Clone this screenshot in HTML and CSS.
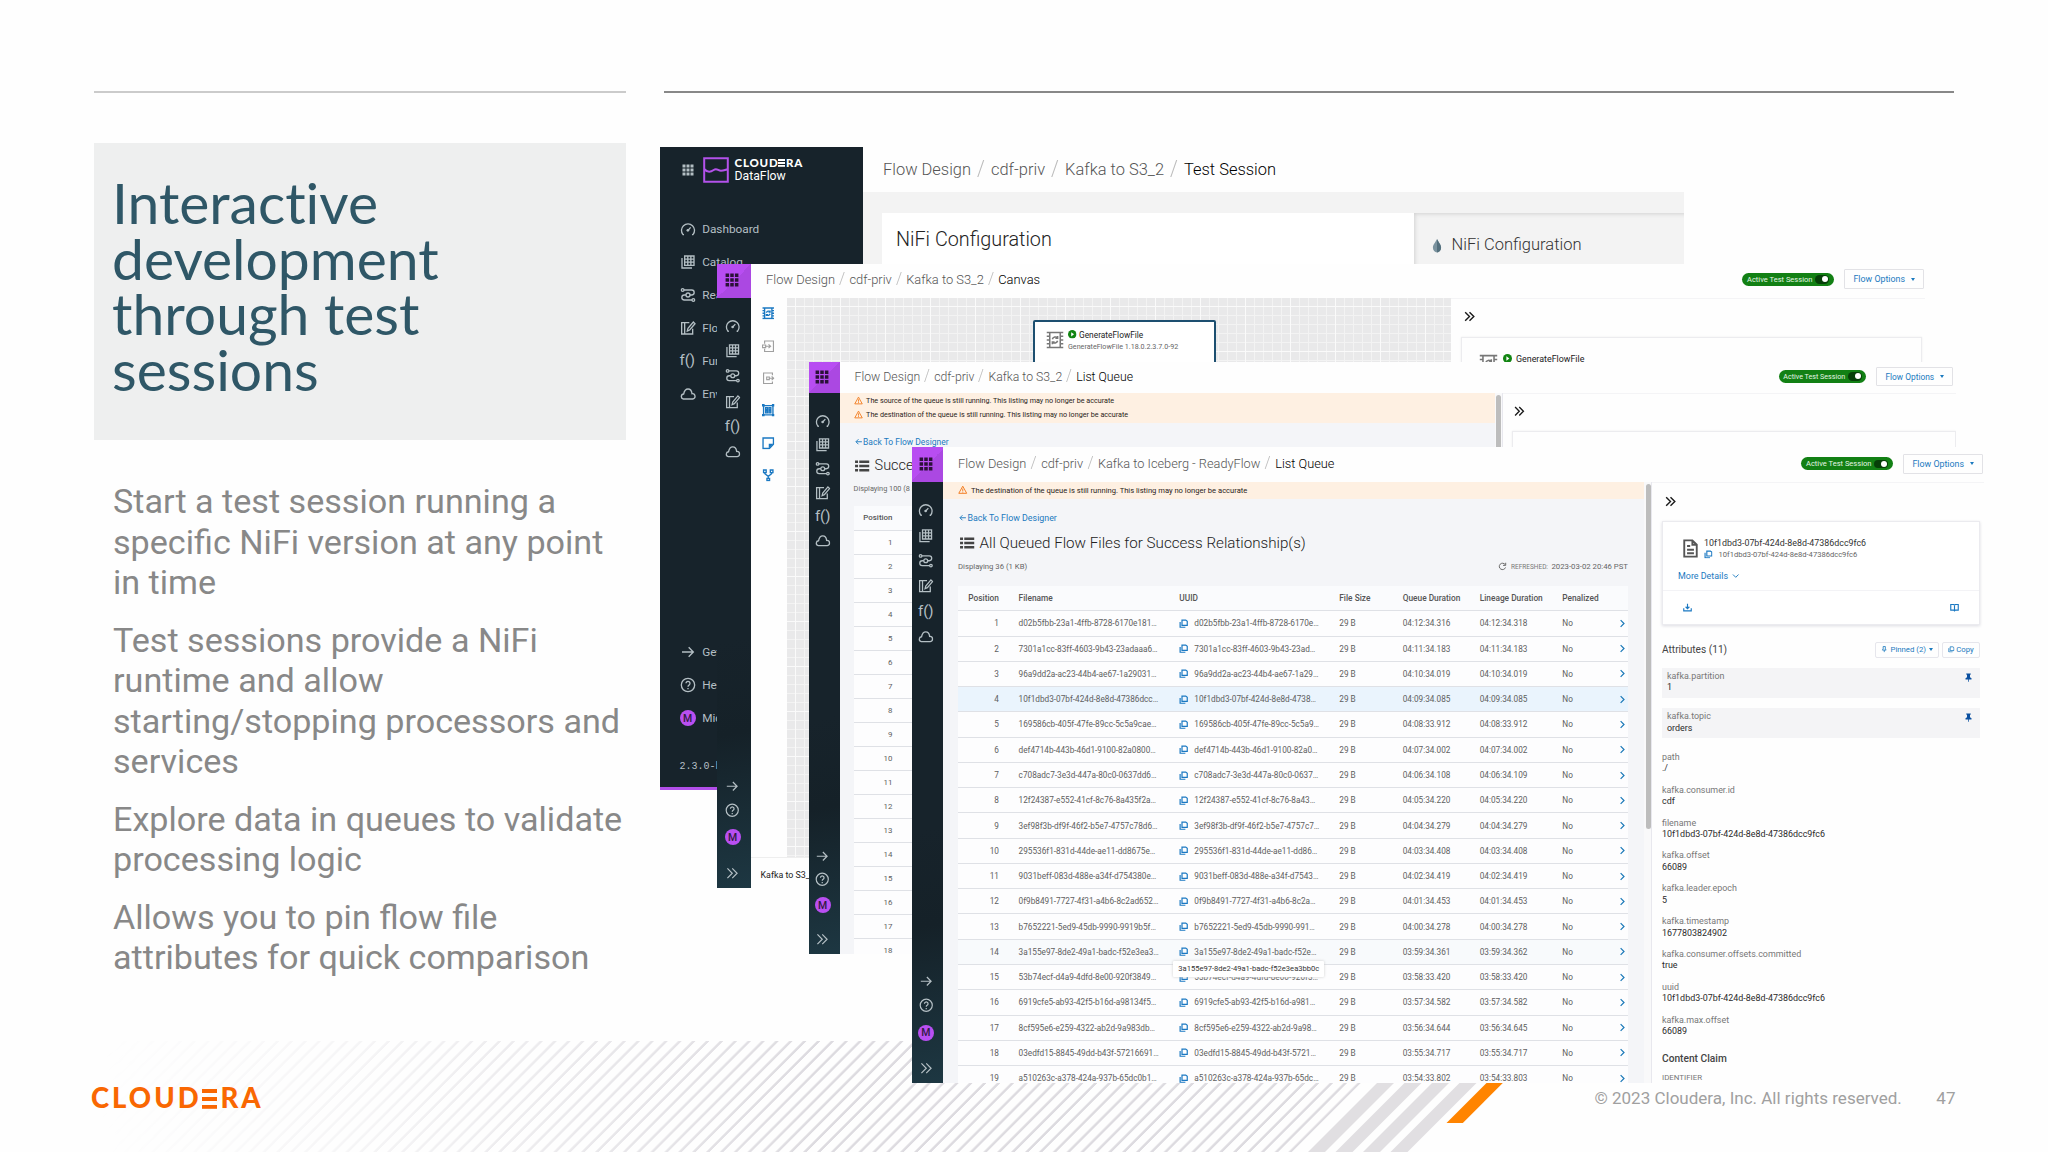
FILE: index.html
```
<!DOCTYPE html>
<html lang="en">
<head>
<meta charset="utf-8">
<title>Interactive development through test sessions</title>
<link rel="stylesheet" href="styles.css">
</head>
<body>
<svg class="defs" aria-hidden="true">
  <symbol id="dots" viewBox="0 0 24 24"><path fill="currentColor" d="M1 1h6v6H1zM9 1h6v6H9zM17 1h6v6h-6zM1 9h6v6H1zM9 9h6v6H9zM17 9h6v6h-6zM1 17h6v6H1zM9 17h6v6H9zM17 17h6v6h-6z"/></symbol>
  <symbol id="gauge" viewBox="0 0 24 24"><path class="ln" d="M6 20.5H4.6A9.8 9.8 0 1 1 19.4 20.5H18M12 14l4-4.5"/><circle cx="11.8" cy="14" r="2" fill="currentColor"/></symbol>
  <symbol id="catalog" viewBox="0 0 24 24"><path class="ln" d="M7 3h14v14H7zM11.700 3v14M16.300 3v14M7 7.700h14M7 12.300h14M3 6v15h15"/></symbol>
  <symbol id="route" viewBox="0 0 24 24"><path class="ln" d="M6 4.500h11.500a3.700 3.700 0 0 1 0 7.500H15M9 12H6.500a3.700 3.700 0 0 0 0 7.500H18"/><circle class="ln" cx="12" cy="12" r="3"/><circle class="ln" cx="4" cy="4.500" r="2"/><circle class="ln" cx="20" cy="19.500" r="2"/></symbol>
  <symbol id="edit" viewBox="0 0 24 24"><path class="ln" d="M14 4H2.500v17H19v-8M7 4v17M11 16.500l1-4L20 3l2.500 2.500-8 9.500z"/></symbol>
  <symbol id="cloud" viewBox="0 0 24 24"><path class="ln" d="M5 19.500a3.800 3.800 0 0 1 .5-7.500C6.500 7 9 4.500 12 4.500s5.500 2.500 6 7a4 4 0 0 1 1 8z"/></symbol>
  <symbol id="arrow" viewBox="0 0 24 24"><path class="ln" d="M3 12h17M13 5l7 7-7 7"/></symbol>
  <symbol id="help" viewBox="0 0 24 24"><circle class="ln" cx="12" cy="12" r="10"/><path class="ln" d="M9 9.500a3 3 0 1 1 4.500 2.600C12.300 12.800 12 13.300 12 14.500M12 16.500v2"/></symbol>
  <symbol id="dbl" viewBox="0 0 24 24"><path class="ln" d="M4 4l8 8-8 8M12 4l8 8-8 8"/></symbol>
  <symbol id="chev" viewBox="0 0 24 24"><path class="ln" d="M7 3l9 9-9 9"/></symbol>
  <symbol id="down" viewBox="0 0 24 24"><path class="ln" d="M3 8l9 9 9-9"/></symbol>
  <symbol id="back" viewBox="0 0 24 24"><path class="ln" d="M22 12H4M11 4l-8 8 8 8"/></symbol>
  <symbol id="copy" viewBox="0 0 24 24"><path class="ln" d="M8 3h10l4 3v11H8zM3 8v14h14"/></symbol>
  <symbol id="warn" viewBox="0 0 24 24"><path class="ln" d="M12 3l10 18H2zM12 9v6M12 16.500v2.500"/></symbol>
  <symbol id="list" viewBox="0 0 24 20"><path fill="currentColor" d="M0 1h5v4H0zM7 1h17v4H7zM0 8h5v4H0zM7 8h17v4H7zM0 15h5v4H0zM7 15h17v4H7z"/></symbol>
  <symbol id="refresh" viewBox="0 0 24 24"><path class="ln" d="M20 14.500a8.500 8.500 0 1 1-1-7.500M20.500 2v7h-7"/></symbol>
  <symbol id="doc" viewBox="0 0 24 30"><path class="ln" d="M2 2h13l7 7v19H2zM15 2v7h7M6.500 11h5M6.500 17h11M6.500 22.500h11"/></symbol>
  <symbol id="download" viewBox="0 0 24 24"><path class="ln" d="M12 2v13M7 10l5 5 5-5M2 14v7h20v-7"/></symbol>
  <symbol id="book" viewBox="0 0 24 24"><path class="ln" d="M2 4h8l2 2 2-2h8v15h-8l-2 2-2-2H2zM12 6v15"/></symbol>
  <symbol id="pin" viewBox="0 0 24 24"><path fill="currentColor" d="M6 1h12v2l-2 2v6l4 3v3h-7v6h-2v-6H4v-3l4-3V5L6 3z"/></symbol>
  <symbol id="pino" viewBox="0 0 24 24"><path class="ln" d="M8 2h8v9l3 4H5l3-4zM12 15v8"/></symbol>
  <symbol id="chip" viewBox="0 0 24 24"><path class="ln" d="M5 2h14v20H5zM1 2h4M1 7h4M1 12h4M1 17h4M1 22h4M19 2h4M19 7h4M19 12h4M19 17h4M19 22h4M8.500 11a4 4 0 0 1 7-1.500M15.500 13a4 4 0 0 1-7 1.500M15.500 6.500v3h-3M8.500 17.500v-3h3"/></symbol>
  <symbol id="inport" viewBox="0 0 24 24"><path class="ln" d="M5 7V2h17v20H5v-5M1 9.500h6v5H1zM7 12h9M12.500 8.500l4 3.500-4 3.500"/></symbol>
  <symbol id="outport" viewBox="0 0 24 24"><path class="ln" d="M20 6V2H3v20h17v-4M9 9.500h5v5H9zM14 12h8M18.500 8.500l4 3.500-4 3.500"/></symbol>
  <symbol id="group" viewBox="0 0 24 24"><path class="ln" d="M3 3h18v18H3zM7 7h3.500v3.500H7zM13.500 7H17v3.500h-3.500zM7 13.500h3.500V17H7zM13.500 13.500H17V17h-3.500z"/><path fill="currentColor" d="M0 0h5v5H0zM19 0h5v5h-5zM0 19h5v5H0zM19 19h5v5h-5z"/></symbol>
  <symbol id="note" viewBox="0 0 24 24"><path class="ln" d="M2 2h20v12l-8 8H2z"/><path fill="currentColor" d="M13 13h9l-9 9z"/></symbol>
  <symbol id="funnel" viewBox="0 0 24 24"><path class="ln" d="M3 2h5v5H3zM16 2h5v5h-5zM9.500 18h5v4h-5zM5.500 7v2l6.500 5 6.500-5V7M12 14v4"/></symbol>
  <symbol id="play" viewBox="0 0 24 24"><circle cx="12" cy="12" r="12" fill="#128512"/><path d="M9 6l8 6-8 6z" fill="#fff"/></symbol>
  <symbol id="drop" viewBox="0 0 16 24"><path fill="#7b939f" d="M8 0c2 5 7 9 7 15a7 8 0 0 1-14 0C1 9 6 5 8 0z"/><path fill="#54707d" d="M8 0c2 5 7 9 7 15a7 8 0 0 1-7 8z"/></symbol>
</svg>

<main class="slide">
  <svg class="stripes" viewBox="0 0 2048 111" aria-hidden="true">
    <defs>
      <linearGradient id="fade"><stop offset="0.050" stop-color="#000"/><stop offset="0.180" stop-color="#444"/><stop offset="0.400" stop-color="#fff"/></linearGradient>
      <mask id="fm"><rect width="2048" height="111" fill="url(#fade)"/></mask>
      <pattern id="thin" width="13.870" height="111" patternUnits="userSpaceOnUse" patternTransform="translate(1403 0) skewX(-45)"><rect x="10.370" width="3.500" height="111" fill="#dddbe0"/></pattern>
    </defs>
    <g mask="url(#fm)"><path d="M0 0H1403L1292 111H0z" fill="url(#thin)"/></g>
    <path fill="#e1dfe2" d="M1419 0h17l-111 111h-17zM1446.500 0h17l-111 111h-17zM1474 0h17l-111 111h-17zM1501.500 0h17l-111 111h-17z"/>
    <path fill="#ff8400" d="M1528.500 0h16.300l-82 82h-16.300z"/>
  </svg>

  <div class="rules"><i></i><i></i></div>
  <section class="copy">
    <h1>Interactive development through test sessions</h1>
    <p>Start a test session running a specific NiFi version at any point in time</p>
    <p>Test sessions provide a NiFi runtime and allow starting/stopping processors and services</p>
    <p>Explore data in queues to validate processing logic</p>
    <p>Allows you to pin flow file attributes for quick comparison</p>
  </section>
  <footer>
    <div class="brand">CLOUD<span class="bars">E</span>RA</div>
    <div class="legal">© 2023 Cloudera, Inc. All rights reserved.</div>
    <div class="page">47</div>
  </footer>

  <!-- Test session settings -->
  <section class="win w-a">
    <nav class="full">
      <div class="logo"><svg class="dt"><use href="#dots"/></svg>
        <svg class="mark" viewBox="0 0 26 26"><path d="M1.200 1.200h23.600v23.600H1.200zM1.200 12c3 3.500 6 3.500 9.500 1 3.200-2.300 4.300.8 7.300.8 3 0 4-1 6.800-1.500" fill="none" stroke="#b352ea" stroke-width="2"/></svg>
        <div><div class="brand sm">CLOUD<span class="bars">E</span>RA</div><div class="prod">DataFlow</div></div></div>
      <a><svg><use href="#gauge"/></svg>Dashboard</a>
      <a><svg><use href="#catalog"/></svg>Catalog</a>
      <a><svg><use href="#route"/></svg>ReadyFlow Gallery</a>
      <a><svg><use href="#edit"/></svg>Flow Design</a>
      <a><span class="fn">f()</span>Functions</a>
      <a><svg><use href="#cloud"/></svg>Environments</a>
      <div class="btm">
        <a><svg><use href="#arrow"/></svg>Get Started</a>
        <a><svg><use href="#help"/></svg>Help</a>
        <a><span class="av">M</span>Michael</a>
        <div class="ver">2.3.0-b</div>
      </div>
    </nav>
    <div class="main">
      <header><div class="crumb"><span>Flow Design</span><i>/</i><span>cdf-priv</span><i>/</i><span>Kafka to S3_2</span><i>/</i><b>Test Session</b></div></header>
      <div class="conf"><div class="panel">NiFi Configuration</div><div class="aside"><svg><use href="#drop"/></svg>NiFi Configuration</div></div>
    </div>
  </section>

  <!-- Canvas -->
  <section class="win w-b">
    <nav class="mini">
      <div class="sq"><svg><use href="#dots"/></svg></div>
      <div class="ics"><svg><use href="#gauge"/></svg><svg><use href="#catalog"/></svg><svg><use href="#route"/></svg><svg><use href="#edit"/></svg><span class="fn">f()</span><svg><use href="#cloud"/></svg></div>
      <div class="low"><svg><use href="#arrow"/></svg><svg><use href="#help"/></svg><span class="av">M</span><svg><use href="#dbl"/></svg></div>
    </nav>
    <div class="main">
      <header><div class="crumb"><span>Flow Design</span><i>/</i><span>cdf-priv</span><i>/</i><span>Kafka to S3_2</span><i>/</i><b>Canvas</b></div>
        <div class="acts"><div class="pill">Active Test Session<em></em></div><div class="btn">Flow Options<u></u></div></div></header>
      <div class="work">
        <div class="tools"><svg><use href="#chip"/></svg><svg class="off"><use href="#inport"/></svg><svg class="off"><use href="#outport"/></svg><svg><use href="#group"/></svg><svg><use href="#note"/></svg><svg><use href="#funnel"/></svg></div>
        <div class="canvas"><div class="node"><svg class="cp"><use href="#chip"/></svg><div><div class="nm"><svg><use href="#play"/></svg>GenerateFlowFile</div><div class="sub">GenerateFlowFile 1.18.0.2.3.7.0-92</div></div></div></div>
        <div class="side"><svg class="dbl"><use href="#dbl"/></svg><div class="bcard"><svg class="cp"><use href="#chip"/></svg><svg class="pl"><use href="#play"/></svg>GenerateFlowFile</div></div>
      </div>
      <div class="tab">Kafka to S3_2</div>
    </div>
  </section>

  <!-- Success queue listing -->
  <section class="win w-c">
    <nav class="mini">
      <div class="sq"><svg><use href="#dots"/></svg></div>
      <div class="ics"><svg><use href="#gauge"/></svg><svg><use href="#catalog"/></svg><svg><use href="#route"/></svg><svg><use href="#edit"/></svg><span class="fn">f()</span><svg><use href="#cloud"/></svg></div>
      <div class="low"><svg><use href="#arrow"/></svg><svg><use href="#help"/></svg><span class="av">M</span><svg><use href="#dbl"/></svg></div>
    </nav>
    <div class="main">
      <header><div class="crumb"><span>Flow Design</span><i>/</i><span>cdf-priv</span><i>/</i><span>Kafka to S3_2</span><i>/</i><b>List Queue</b></div>
        <div class="acts"><div class="pill">Active Test Session<em></em></div><div class="btn">Flow Options<u></u></div></div></header>
      <div class="work">
        <div class="queue">
          <div class="warn"><div><svg><use href="#warn"/></svg>The source of the queue is still running. This listing may no longer be accurate</div><div><svg><use href="#warn"/></svg>The destination of the queue is still running. This listing may no longer be accurate</div></div>
          <div class="backl"><svg><use href="#back"/></svg>Back To Flow Designer</div>
          <h2><svg><use href="#list"/></svg>Success</h2>
          <div class="disp">Displaying 100 (8 KB)</div>
          <div class="table"><div class="tr th"><span>Position</span></div><div class="tr"><span>1</span></div><div class="tr"><span>2</span></div><div class="tr"><span>3</span></div><div class="tr"><span>4</span></div><div class="tr"><span>5</span></div><div class="tr"><span>6</span></div><div class="tr"><span>7</span></div><div class="tr"><span>8</span></div><div class="tr"><span>9</span></div><div class="tr"><span>10</span></div><div class="tr"><span>11</span></div><div class="tr"><span>12</span></div><div class="tr"><span>13</span></div><div class="tr"><span>14</span></div><div class="tr"><span>15</span></div><div class="tr"><span>16</span></div><div class="tr"><span>17</span></div><div class="tr"><span>18</span></div></div>
        </div>
        <div class="bar"><i></i></div>
        <div class="side"><svg class="dbl"><use href="#dbl"/></svg><div class="bcard"></div></div>
      </div>
    </div>
  </section>

  <!-- Queued flow files with attributes -->
  <section class="win w-d">
    <nav class="mini">
      <div class="sq"><svg><use href="#dots"/></svg></div>
      <div class="ics"><svg><use href="#gauge"/></svg><svg><use href="#catalog"/></svg><svg><use href="#route"/></svg><svg><use href="#edit"/></svg><span class="fn">f()</span><svg><use href="#cloud"/></svg></div>
      <div class="low"><svg><use href="#arrow"/></svg><svg><use href="#help"/></svg><span class="av">M</span><svg><use href="#dbl"/></svg></div>
    </nav>
    <div class="main">
      <header><div class="crumb"><span>Flow Design</span><i>/</i><span>cdf-priv</span><i>/</i><span>Kafka to Iceberg - ReadyFlow</span><i>/</i><b>List Queue</b></div>
        <div class="acts"><div class="pill">Active Test Session<em></em></div><div class="btn">Flow Options<u></u></div></div></header>
      <div class="work">
        <div class="queue">
          <div class="warn"><div><svg><use href="#warn"/></svg>The destination of the queue is still running. This listing may no longer be accurate</div></div>
          <div class="backl"><svg><use href="#back"/></svg>Back To Flow Designer</div>
          <h2><svg><use href="#list"/></svg>All Queued Flow Files for Success Relationship(s)</h2>
          <div class="disp">Displaying 36 (1 KB)<span class="ref"><svg><use href="#refresh"/></svg><small>REFRESHED:</small>2023-03-02 20:46 PST</span></div>
          <div class="table">
            <div class="tr th"><span>Position</span><span>Filename</span><span>UUID</span><span>File Size</span><span>Queue Duration</span><span>Lineage Duration</span><span>Penalized</span></div>
            <div class="tr"><span>1</span><span>d02b5fbb-23a1-4ffb-8728-6170e181…</span><span><svg><use href="#copy"/></svg>d02b5fbb-23a1-4ffb-8728-6170e…</span><span>29 B</span><span>04:12:34.316</span><span>04:12:34.318</span><span>No</span><svg><use href="#chev"/></svg></div>
            <div class="tr"><span>2</span><span>7301a1cc-83ff-4603-9b43-23adaaa6…</span><span><svg><use href="#copy"/></svg>7301a1cc-83ff-4603-9b43-23ad…</span><span>29 B</span><span>04:11:34.183</span><span>04:11:34.183</span><span>No</span><svg><use href="#chev"/></svg></div>
            <div class="tr"><span>3</span><span>96a9dd2a-ac23-44b4-ae67-1a29031…</span><span><svg><use href="#copy"/></svg>96a9dd2a-ac23-44b4-ae67-1a29…</span><span>29 B</span><span>04:10:34.019</span><span>04:10:34.019</span><span>No</span><svg><use href="#chev"/></svg></div>
            <div class="tr sel"><span>4</span><span>10f1dbd3-07bf-424d-8e8d-47386dcc…</span><span><svg><use href="#copy"/></svg>10f1dbd3-07bf-424d-8e8d-4738…</span><span>29 B</span><span>04:09:34.085</span><span>04:09:34.085</span><span>No</span><svg><use href="#chev"/></svg></div>
            <div class="tr"><span>5</span><span>169586cb-405f-47fe-89cc-5c5a9cae…</span><span><svg><use href="#copy"/></svg>169586cb-405f-47fe-89cc-5c5a9…</span><span>29 B</span><span>04:08:33.912</span><span>04:08:33.912</span><span>No</span><svg><use href="#chev"/></svg></div>
            <div class="tr"><span>6</span><span>def4714b-443b-46d1-9100-82a0800…</span><span><svg><use href="#copy"/></svg>def4714b-443b-46d1-9100-82a0…</span><span>29 B</span><span>04:07:34.002</span><span>04:07:34.002</span><span>No</span><svg><use href="#chev"/></svg></div>
            <div class="tr"><span>7</span><span>c708adc7-3e3d-447a-80c0-0637dd6…</span><span><svg><use href="#copy"/></svg>c708adc7-3e3d-447a-80c0-0637…</span><span>29 B</span><span>04:06:34.108</span><span>04:06:34.109</span><span>No</span><svg><use href="#chev"/></svg></div>
            <div class="tr"><span>8</span><span>12f24387-e552-41cf-8c76-8a435f2a…</span><span><svg><use href="#copy"/></svg>12f24387-e552-41cf-8c76-8a43…</span><span>29 B</span><span>04:05:34.220</span><span>04:05:34.220</span><span>No</span><svg><use href="#chev"/></svg></div>
            <div class="tr"><span>9</span><span>3ef98f3b-df9f-46f2-b5e7-4757c78d6…</span><span><svg><use href="#copy"/></svg>3ef98f3b-df9f-46f2-b5e7-4757c7…</span><span>29 B</span><span>04:04:34.279</span><span>04:04:34.279</span><span>No</span><svg><use href="#chev"/></svg></div>
            <div class="tr"><span>10</span><span>295536f1-831d-44de-ae11-dd8675e…</span><span><svg><use href="#copy"/></svg>295536f1-831d-44de-ae11-dd86…</span><span>29 B</span><span>04:03:34.408</span><span>04:03:34.408</span><span>No</span><svg><use href="#chev"/></svg></div>
            <div class="tr"><span>11</span><span>9031beff-083d-488e-a34f-d754380e…</span><span><svg><use href="#copy"/></svg>9031beff-083d-488e-a34f-d7543…</span><span>29 B</span><span>04:02:34.419</span><span>04:02:34.419</span><span>No</span><svg><use href="#chev"/></svg></div>
            <div class="tr"><span>12</span><span>0f9b8491-7727-4f31-a4b6-8c2ad652…</span><span><svg><use href="#copy"/></svg>0f9b8491-7727-4f31-a4b6-8c2a…</span><span>29 B</span><span>04:01:34.453</span><span>04:01:34.453</span><span>No</span><svg><use href="#chev"/></svg></div>
            <div class="tr"><span>13</span><span>b7652221-5ed9-45db-9990-9919b5f…</span><span><svg><use href="#copy"/></svg>b7652221-5ed9-45db-9990-991…</span><span>29 B</span><span>04:00:34.278</span><span>04:00:34.278</span><span>No</span><svg><use href="#chev"/></svg></div>
            <div class="tr hov"><span>14</span><span>3a155e97-8de2-49a1-badc-f52e3ea3…</span><span><svg><use href="#copy"/></svg>3a155e97-8de2-49a1-badc-f52e…<q>3a155e97-8de2-49a1-badc-f52e3ea3bb0c</q></span><span>29 B</span><span>03:59:34.361</span><span>03:59:34.362</span><span>No</span><svg><use href="#chev"/></svg></div>
            <div class="tr"><span>15</span><span>53b74ecf-d4a9-4dfd-8e00-920f3849…</span><span><svg><use href="#copy"/></svg>53b74ecf-d4a9-4dfd-8e00-920f3…</span><span>29 B</span><span>03:58:33.420</span><span>03:58:33.420</span><span>No</span><svg><use href="#chev"/></svg></div>
            <div class="tr"><span>16</span><span>6919cfe5-ab93-42f5-b16d-a98134f5…</span><span><svg><use href="#copy"/></svg>6919cfe5-ab93-42f5-b16d-a981…</span><span>29 B</span><span>03:57:34.582</span><span>03:57:34.582</span><span>No</span><svg><use href="#chev"/></svg></div>
            <div class="tr"><span>17</span><span>8cf595e6-e259-4322-ab2d-9a983db…</span><span><svg><use href="#copy"/></svg>8cf595e6-e259-4322-ab2d-9a98…</span><span>29 B</span><span>03:56:34.644</span><span>03:56:34.645</span><span>No</span><svg><use href="#chev"/></svg></div>
            <div class="tr"><span>18</span><span>03edfd15-8845-49dd-b43f-57216691…</span><span><svg><use href="#copy"/></svg>03edfd15-8845-49dd-b43f-5721…</span><span>29 B</span><span>03:55:34.717</span><span>03:55:34.717</span><span>No</span><svg><use href="#chev"/></svg></div>
            <div class="tr"><span>19</span><span>a510263c-a378-424a-937b-65dc0b1…</span><span><svg><use href="#copy"/></svg>a510263c-a378-424a-937b-65dc…</span><span>29 B</span><span>03:54:33.802</span><span>03:54:33.803</span><span>No</span><svg><use href="#chev"/></svg></div>
          </div>
        </div>
        <div class="bar"><i></i></div>
        <div class="side">
          <svg class="dbl"><use href="#dbl"/></svg>
          <div class="file">
            <div class="top"><svg class="doc"><use href="#doc"/></svg><div><div class="t1">10f1dbd3-07bf-424d-8e8d-47386dcc9fc6</div><div class="t2"><svg><use href="#copy"/></svg>10f1dbd3-07bf-424d-8e8d-47386dcc9fc6</div></div></div>
            <div class="more">More Details<svg><use href="#down"/></svg></div>
            <div class="foot"><svg><use href="#download"/></svg><svg><use href="#book"/></svg></div>
          </div>
          <div class="ahead"><span>Attributes (11)</span><div class="sb p"><svg><use href="#pino"/></svg>Pinned (2)<u></u></div><div class="sb"><svg><use href="#copy"/></svg>Copy</div></div>
          <div class="attr pinned"><div>kafka.partition</div><b>1</b><svg><use href="#pin"/></svg></div>
          <div class="attr pinned"><div>kafka.topic</div><b>orders</b><svg><use href="#pin"/></svg></div>
          <div class="attrs">
            <div class="attr"><div>path</div><b>./</b></div>
            <div class="attr"><div>kafka.consumer.id</div><b>cdf</b></div>
            <div class="attr"><div>filename</div><b>10f1dbd3-07bf-424d-8e8d-47386dcc9fc6</b></div>
            <div class="attr"><div>kafka.offset</div><b>66089</b></div>
            <div class="attr"><div>kafka.leader.epoch</div><b>5</b></div>
            <div class="attr"><div>kafka.timestamp</div><b>1677803824902</b></div>
            <div class="attr"><div>kafka.consumer.offsets.committed</div><b>true</b></div>
            <div class="attr"><div>uuid</div><b>10f1dbd3-07bf-424d-8e8d-47386dcc9fc6</b></div>
            <div class="attr"><div>kafka.max.offset</div><b>66089</b></div>
          </div>
          <h3>Content Claim</h3>
          <div class="ident">IDENTIFIER</div>
        </div>
      </div>
    </div>
  </section>
</main>
</body>
</html>
```

FILE: styles.css
```
* { box-sizing: border-box; }
body { margin: 0; background: #fff; font-family: "Roboto", "Liberation Sans", sans-serif; }
svg { display: block; flex: none; overflow: visible; }
.defs { position: absolute; width: 0; height: 0; }
.ln { fill: none; stroke: currentColor; stroke-width: var(--sw, 2); }

.slide { position: relative; width: 2048px; height: 1152px; overflow: hidden; background: #fefefe; display: flex; flex-direction: column; }
.stripes { position: absolute; left: 0; top: 1041px; width: 2048px; height: 111px; }
.rules { display: flex; gap: 38px; padding: 91px 94px 0; height: 93px; }
.rules i { width: 532px; height: 2px; background: #cbcbcb; }
.rules i + i { width: auto; flex: 1; background: #888; }

.copy { width: 532px; margin: 50px 0 0 94px; flex: 1; }
h1 { margin: 0 0 41px; height: 297px; padding: 32px 120px 0 18px; background: #eeefef; color: #2f5767; font: 400 57px/55.500px "Lato", sans-serif; font-variant-ligatures: none; }
.copy p { margin: 0 0 16.800px 19px; font-size: 34.130px; line-height: 40.600px; color: #888; white-space: normal; width: 513px; }
footer { position: relative; display: flex; align-items: center; height: 108px; padding: 0 92.500px 0 91px; font-size: 17.020px; color: #a0a0a0; }
.legal { margin-left: auto; }
.page { margin-left: 34.500px; }

.brand { font: 900 27.500px/1 "Lato", sans-serif; letter-spacing: 3px; color: #f96702; white-space: nowrap; }
.bars { color: transparent; background: linear-gradient(#f96702 20%, transparent 20% 40%, #f96702 40% 60%, transparent 60% 80%, #f96702 80%) 0 56%/calc(100% - 3px) 60% no-repeat; }
.brand.sm { font-size: 11.500px; letter-spacing: .8px; color: #fff; }
.sm .bars { background-size: calc(100% - 1px) 60%; background-image: linear-gradient(#fff 20%, transparent 20% 40%, #fff 40% 60%, transparent 60% 80%, #fff 80%); }

/* overlapping windows */
.win { position: absolute; display: flex; overflow: hidden; background: #fefefe; white-space: nowrap; }
.w-a { left: 660px; top: 147px; width: 1024px; height: 643px; --fs: 16.450px; --gap: 20px; --head: 45px; }
.w-b { left: 716.500px; top: 264px; width: 1208.500px; height: 624px; --side: 34px; --head: 33.500px; --pitch: 25.300px; --fs: 12.900px; --gap: 14.400px; }
.w-c { left: 809.300px; top: 362px; width: 1147px; height: 592px; --side: 30.300px; --head: 31px; --pitch: 24px; --fs: 12.250px; --gap: 14px; }
.w-d { left: 912px; top: 447px; width: 1072px; height: 636px; --side: 31px; --head: 35px; --pitch: 25.300px; --fs: 12.750px; --gap: 14.900px; }
.main { flex: 1; min-width: 0; display: flex; flex-direction: column; }
.work { flex: 1; min-height: 0; display: flex; }

nav { background: linear-gradient(170deg, #17232b 60%, #152128 75%, #1d3742); color: #b4bfc4; display: flex; flex-direction: column; flex: none; }
.fn { font-size: 15px; line-height: 1; font-weight: 400; }
.av { display: flex; align-items: center; justify-content: center; width: 16px; height: 16px; border-radius: 50%; background: #b94ff2; color: #331a44; font-size: 10.500px; font-weight: 500; }
.full { width: 203px; padding-left: 19.500px; font-size: 11.800px; background: #17232b; border-bottom: 3px solid #b14ee8; }
.full .logo { display: flex; align-items: center; height: 34px; margin: 6px 0 26px; padding-left: 2px; }
.full .dt { width: 12px; height: 12px; }
.full .mark { width: 26px; height: 26px; margin: 0 6px 0 9px; }
.prod { color: #fff; font-size: 12.250px; line-height: 14px; }
.full a { display: flex; align-items: center; height: 32.850px; }
.full a svg, .full a .fn, .full a .av { width: 16px; height: 16px; margin-right: 6.700px; }
.full .btm { margin-top: auto; padding-bottom: 13px; }
.ver { font: 10px/14px "Liberation Mono", monospace; margin-top: 25.500px; }

.mini { width: var(--side); align-items: center; }
.sq { width: 100%; height: var(--head); flex: none; display: flex; align-items: center; justify-content: center; background: linear-gradient(135deg, #b84df2 50%, #ab48e2 50%); color: #2b1138; padding: 0 4px 2px 0; }
.ics { margin-top: 15.500px; display: grid; grid-auto-rows: var(--pitch); place-items: center; padding-right: 3.500px; }
.mini svg { width: 15.500px; height: 15.500px; }
.mini .sq svg { width: 14px; height: 14px; }
.low { margin-top: auto; display: grid; grid-template-rows: 24px 24px 30px 42px; place-items: center; margin-bottom: -6.500px; padding-right: 3.500px; }
.low svg { width: 14.500px; height: 14.500px; }
.w-b .ics, .w-b .low { padding-right: 2px; }
.w-b .low { margin-bottom: -6px; }
.w-c .low { grid-template-rows: 23px 23px 28px 41px; margin-bottom: -6px; }

header { display: flex; align-items: center; height: var(--head); flex: none; padding: 0 0 2px 15px; }
.crumb { display: flex; align-items: center; font-size: var(--fs); font-weight: 300; color: #555; }
.crumb b { font-weight: 300; color: #000; }
.crumb i { width: var(--gap); text-align: center; font-style: normal; font-size: var(--fs); line-height: 1; color: #bbb; transform: scale(1.200, 1.350); }
.acts { margin-left: auto; display: flex; align-items: center; gap: 10px; padding-right: 1px; }
.pill { display: flex; align-items: center; gap: 3px; height: 13px; width: 92px; padding: 0 4.500px 0 5px; border-radius: 7px; background: #128014; color: #e4f6e4; font-size: 7.550px; }
.pill em { width: 14px; height: 8.500px; border-radius: 5px; background: #063f08; padding: 1.200px 1.500px; display: flex; justify-content: flex-end; }
.pill em::after { content: ""; width: 6px; height: 6px; border-radius: 50%; background: #fff; }
.btn { display: flex; align-items: center; justify-content: center; gap: 5.500px; width: 80px; height: 20px; border: 1px solid #e2e2e6; border-radius: 1px; color: #1b7abf; font-size: 8.850px; }
u { border: 2.300px solid transparent; border-top: 3px solid currentColor; border-bottom: 0; }
.w-c .acts { padding-right: 3.500px; }
.w-c .pill { width: 87px; font-size: 7.150px; padding: 0 4px; }
.w-c .btn { width: 76.500px; height: 18.500px; font-size: 8.400px; }
.w-b header { padding: 0 0 3px 15.500px; }
.w-a header { padding: 0 0 0 20px; }
.w-d header { padding-bottom: 1.500px; }

.conf { flex: 1; display: flex; background: #f3f3f3; padding: 21px 0 0 19px; font-weight: 300; }
.panel { width: 532px; background: #fff; padding: 14px 14px; font-size: 19.800px; line-height: 26px; color: #222; }
.aside { flex: 1; padding: 21px 18px; display: flex; gap: 9.500px; font-size: 16.500px; line-height: 22px; color: #333; box-shadow: inset 3px 3px 4px -2px #d2d2d2; }
.aside svg { width: 10px; height: 14px; margin-top: 5px; }

.tools { width: 36px; display: grid; grid-auto-rows: 32.350px; place-items: center; align-content: start; color: #1a78c2; flex: none; --sw: 2.600; }
.tools svg { width: 12.500px; height: 12.500px; }
.tools .off { color: #a0a0a0; --sw: 2.200; }
.canvas { width: 664px; flex: none; background-color: #e9e9ea; background-image: linear-gradient(#fafafa 1px, transparent 1px), linear-gradient(90deg, #fafafa 1px, transparent 1px), linear-gradient(#f3f3f3 1px, transparent 1px), linear-gradient(90deg, #f3f3f3 1px, transparent 1px); background-size: 45px 45px, 45px 45px, 9px 9px, 9px 9px; background-position: 8px 8px; }
.node { margin: 22.500px 0 0 246.500px; width: 183px; height: 90px; background: #fff; border: 2px solid #1d4f70; border-radius: 2px; padding: 6.500px 0 0 11px; display: flex; gap: 4px; }
.cp { width: 18px; height: 18px; color: #777; margin-top: 2px; }
.nm { display: flex; align-items: center; gap: 2.500px; font-size: 8.350px; line-height: 12px; color: #222; }
.nm svg { width: 8.500px; height: 8.500px; }
.sub { font-size: 7.150px; line-height: 11px; color: #666; }
.side { flex: 1; min-width: 0; border-top: 1px solid #f4f4f6; color: #1a1a1a; }
.w-b .side { padding: 11px 3px 0 10.500px; }
.dbl { width: 13px; height: 13px; margin-left: 1.500px; --sw: 2.600; }
.bcard { margin-top: 14.500px; height: 100px; border: 1px solid #ececef; box-shadow: 0 0 2px #eee; padding: 14.500px 17px; font-size: 8.900px; line-height: 13px; display: flex; }
.bcard .cp { width: 19px; height: 19px; margin-top: 1px; }
.bcard .pl { width: 9px; height: 9px; margin: 1.500px 4px 0 5px; }
.tab { height: 31px; padding: 8px 10px; font-size: 8.900px; line-height: 18px; color: #222; flex: none; border-top: 1px solid #eee; }

.queue { background: #f4f5f8; flex: none; width: 701px; }
.warn { background: #fef0e2; color: #2a2320; height: 17px; padding-left: 15px; }
.warn div { display: flex; align-items: center; gap: 3.500px; height: 16px; font-size: 7.580px; }
.warn svg { width: 9.500px; height: 9.500px; color: #f27a1c; --sw: 2.400; }
.backl { margin: 7px 0 0 16px; height: 24px; display: flex; align-items: center; gap: 1px; color: #1b7abf; font-size: 8.870px; --sw: 3; }
.backl svg { width: 7.500px; height: 7.500px; }
h2 { margin: 0 0 0 17px; height: 26.300px; display: flex; align-items: center; gap: 5px; font-size: 15.170px; font-weight: 300; color: #222; }
h2 svg { width: 14.500px; height: 12px; color: #444; }
.disp { margin: 0 16px 0 15px; height: 21.400px; display: flex; align-items: center; font-size: 7.720px; color: #666; }
.ref { margin-left: auto; display: flex; align-items: center; font-size: 7.780px; }
.ref svg { width: 9px; height: 9px; --sw: 2.600; }
.ref small { font-size: 6.480px; margin: 0 3.500px 0 4.500px; color: #777; }
.table { margin: 8px 16px 0 15px; background: #fdfdfe; }
.tr { display: grid; grid-template-columns: 60.600px 160.700px 160px 63.400px 77px 82.600px 56px 10px; align-items: center; height: 25.280px; border-top: 1px solid #dfe1e6; font-size: 8.220px; color: #606060; }
.tr.th { height: 24.600px; border: 0; font-size: 8.330px; font-weight: 500; color: #555; background: #fafbfd; }
.tr > span:first-child { text-align: right; padding-right: 19.700px; }
.tr > svg { width: 9px; height: 9px; color: #1a78b8; --sw: 3.200; }
.tr span:nth-child(3) { display: flex; align-items: center; position: relative; }
.tr span svg { width: 9px; height: 9px; margin-right: 6px; color: #1a78c2; --sw: 3.200; }
.sel { background: #eaf4fd; }
.hov { background: #f8fafc; }
q { quotes: none; position: absolute; left: -6px; top: 14px; z-index: 2; height: 16.500px; width: 151px; padding-left: 5px; background: #fff; box-shadow: 0 0 3px #ccc; border-radius: 1px; font-size: 7.590px; line-height: 16.500px; color: #333; }
.bar { width: 8px; flex: none; background: #f9f9fa; border-right: 1px solid #e8e8ee; padding: 2px 1.500px; }
.bar i { display: block; width: 5px; height: 345px; border-radius: 3px; background: #bdbdbd; }

.w-c .queue { width: 655px; }
.w-c .warn { height: 30px; padding: .5px 14px; }
.w-c .warn div { height: 14px; font-size: 7.190px; }
.w-c .warn svg { width: 9px; height: 9px; }
.w-c .backl { height: 23.400px; font-size: 8.480px; margin-left: 15px; }
.w-c h2 { height: 24.600px; font-size: 14.450px; margin-left: 15.500px; }
.w-c .disp { height: 21px; font-size: 7.350px; margin-left: 14px; }
.w-c .table { margin: 7px 16px 0 14px; }
.w-c .tr { height: 24.020px; font-size: 7.900px; }
.w-c .tr > span:first-child { padding-right: 21.800px; }
.w-c .side { padding: 11px 0 0 9px; }
.w-c .bcard { margin-top: 13px; }
.w-c .dbl { width: 12.500px; height: 12.500px; }

.w-d .side { padding: 11.500px 4.500px 0 10px; }
.file { margin-top: 13.500px; height: 104px; border: 1px solid #ebebef; box-shadow: 0 1px 3px #dcdce2; background: #fff; }
.top { display: flex; gap: 6.500px; padding: 15px 0 0 19.500px; height: 39px; }
.doc { width: 15px; height: 19px; color: #555; margin-top: 2px; --sw: 3; }
.t1 { font-size: 8.870px; line-height: 12px; color: #333; }
.t2 { display: flex; align-items: center; font-size: 7.590px; line-height: 11px; color: #666; }
.t2 svg { width: 8.500px; height: 8.500px; color: #1a78c2; margin-right: 6px; --sw: 3.200; }
.more { display: flex; align-items: center; height: 29px; gap: 4px; padding-left: 15px; font-size: 8.930px; color: #1b7abf; --sw: 3; }
.more svg { width: 7.500px; height: 7.500px; }
.foot { display: flex; align-items: center; justify-content: space-between; height: 33px; padding: 0 20px; border-top: 1px solid #f3f3f6; color: #1a78c2; --sw: 3; }
.foot svg { width: 9px; height: 9px; }
.ahead { margin-top: 12.500px; height: 24px; display: flex; align-items: center; gap: 3px; font-size: 10.150px; color: #444; }
.ahead span { margin-right: auto; }
.sb { display: flex; align-items: center; gap: 2px; height: 16px; width: 37.500px; justify-content: center; border: 1px solid #e6e6ec; border-radius: 2px; color: #1b7abf; font-size: 7.780px; --sw: 3; }
.sb.p { width: 64px; gap: 3px; }
.sb svg { width: 6.500px; height: 6.500px; }
.sb u { border-width: 3px 2px 0; }
.attr { font-size: 8.920px; line-height: 11.400px; color: #777; }
.attr b { display: block; font-weight: 400; color: #2a2a2a; }
.pinned { position: relative; height: 30px; margin: 6px 0 10.300px; padding: 3.300px 5px; background: #f4f4f6; }
.pinned + .pinned { margin-top: 0; }
.pinned svg { position: absolute; right: 7px; top: 5.500px; width: 9px; height: 9px; color: #0b50a0; }
.attrs { display: grid; gap: 10.050px; margin-top: 14px; }
h3 { margin: 14.500px 0 7px; font-size: 10.200px; line-height: 14px; font-weight: 500; color: #444; }
.ident { font-size: 7.900px; line-height: 10px; color: #777; }
```
